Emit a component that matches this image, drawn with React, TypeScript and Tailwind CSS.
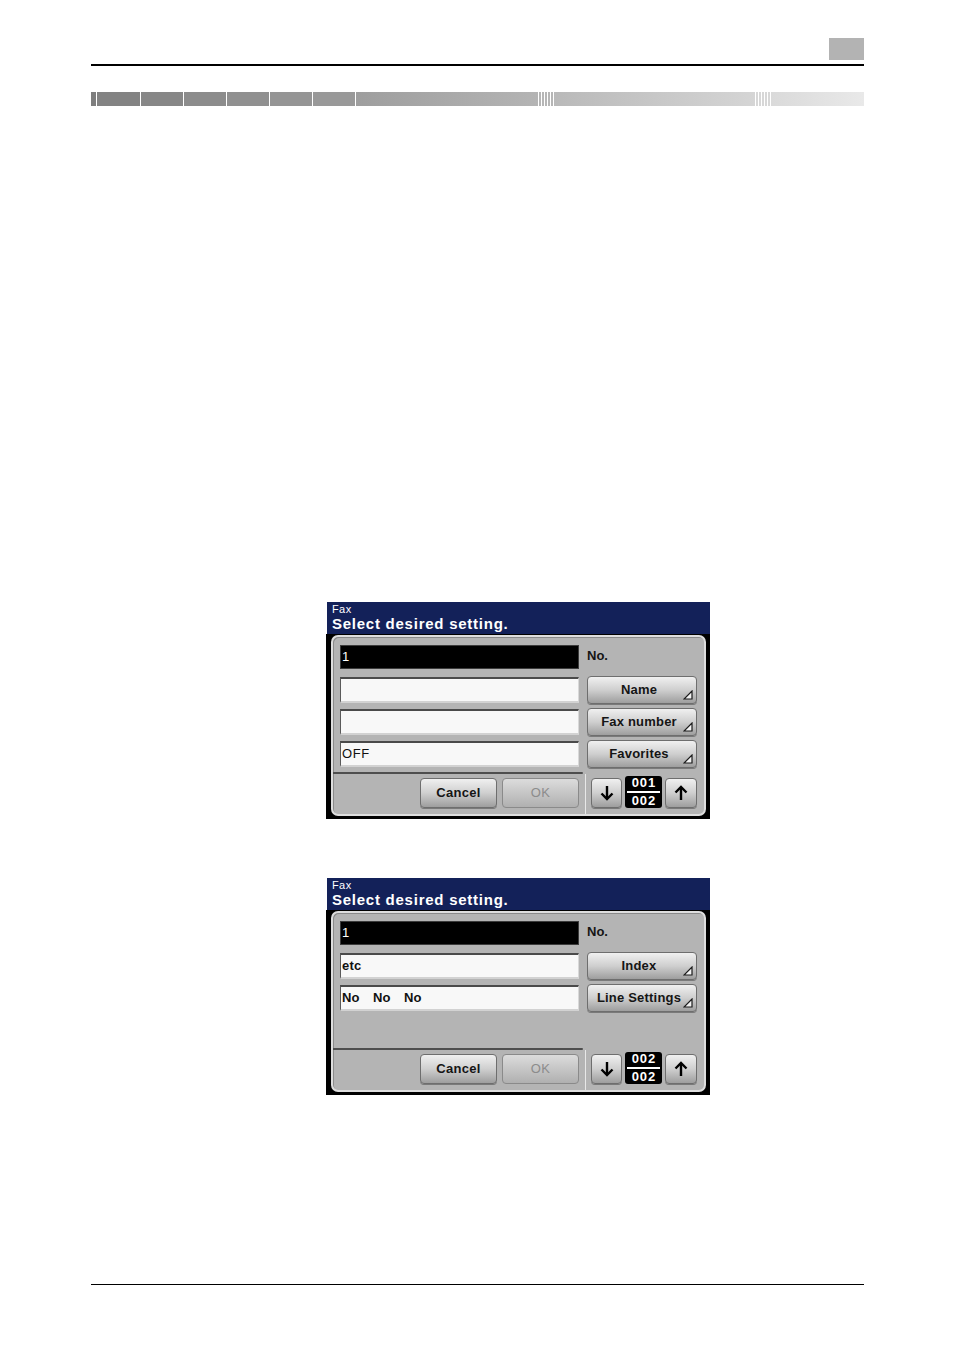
import React from "react";

// Fax settings screens, two states of the same touch panel.
type Field = { text: string | string[]; bold?: boolean; dark?: boolean };
type Screen = {
  fields: Field[];
  buttons: string[];
  page: [string, string];
};

const screens: Screen[] = [
  {
    fields: [
      { text: "1", dark: true },
      { text: "" },
      { text: "" },
      { text: "OFF" },
    ],
    buttons: ["Name", "Fax number", "Favorites"],
    page: ["001", "002"],
  },
  {
    fields: [
      { text: "1", dark: true },
      { text: "etc", bold: true },
      { text: ["No", "No", "No"], bold: true },
    ],
    buttons: ["Index", "Line Settings"],
    page: ["002", "002"],
  },
];

function CornerMark() {
  return (
    <svg
      width="10"
      height="10"
      viewBox="0 0 10 10"
      className="absolute right-[3px] bottom-[3px]"
    >
      <polygon
        points="9,1 9,9 1,9"
        fill="#f2f2f2"
        stroke="#1a1a1a"
        strokeWidth="1.2"
      />
    </svg>
  );
}

function Arrow({ up }: { up?: boolean }) {
  return (
    <svg width="16" height="16" viewBox="0 0 16 16">
      {up ? (
        <>
          <line x1="8" y1="15" x2="8" y2="2.5" stroke="#000" strokeWidth="2.4" />
          <polyline points="2.5,7.5 8,2 13.5,7.5" fill="none" stroke="#000" strokeWidth="2.4" />
        </>
      ) : (
        <>
          <line x1="8" y1="1" x2="8" y2="13.5" stroke="#000" strokeWidth="2.4" />
          <polyline points="2.5,8.5 8,14 13.5,8.5" fill="none" stroke="#000" strokeWidth="2.4" />
        </>
      )}
    </svg>
  );
}

const btn =
  "rounded-[4px] border border-[#6e6e6e] bg-gradient-to-b from-[#f0f0f0] via-[#cfcfcf] to-[#9e9e9e] shadow-[0_1px_0_#7a7a7a]";

function PanelScreen({ screen }: { screen: Screen }) {
  return (
    <div className="ml-[326px] w-[384px] h-[217px] flex flex-col">
      {/* Title bar */}
      <div className="ml-[1px] h-[32px] bg-[#132159] pl-[5px] flex flex-col text-white">
        <span className="text-[11px] leading-[12px] mt-[1px] tracking-[0.4px]">Fax</span>
        <span className="text-[15px] leading-[17px] font-bold tracking-[0.75px]">
          Select desired setting.
        </span>
      </div>

      {/* Panel */}
      <div className="h-[185px] bg-black pt-[1px] pl-[5px] pr-[4px] pb-[3px]">
        <div className="h-[181px] rounded-[7px] border-2 border-[#dedede] bg-[#b4b4b4] flex flex-col shadow-[inset_1px_1px_0_#8a8a8a]">
          <div className="h-[128px] mt-[7px] flex flex-col">
            {screen.fields.map((f, i) => (
              <div key={i} className="h-[32px] flex pl-[7px] pr-[7px] gap-[8px]">
                {f.dark ? (
                  <div className="mt-[1px] w-[239px] h-[24px] bg-black border border-[#3c3c3c] text-white text-[13px] leading-[22px] pl-px">
                    {f.text}
                  </div>
                ) : (
                  <div
                    className={`mt-[1px] w-[239px] h-[26px] flex bg-[#f8f8f8] border-t-2 border-l border-b-2 border-r border-t-[#4a4a4a] border-l-[#5a5a5a] border-b-[#d2d2d2] border-r-[#d8d8d8] text-[#111] text-[13px] leading-[21px] pl-px ${
                      f.bold ? "font-bold tracking-[0.2px]" : "tracking-[0.6px]"
                    }`}
                  >
                    {Array.isArray(f.text)
                      ? f.text.map((t, k) => (
                          <span key={k} className="w-[31px]">
                            {t}
                          </span>
                        ))
                      : f.text}
                  </div>
                )}
                {i === 0 ? (
                  <div className="text-[13px] font-bold text-[#151515] leading-[24px]">No.</div>
                ) : (
                  <div
                    className={`relative w-[110px] h-[28px] ${btn} flex items-center justify-center pr-[6px] text-[13px] font-bold text-[#151515] tracking-[0.2px]`}
                  >
                    {screen.buttons[i - 1]}
                    <CornerMark />
                  </div>
                )}
              </div>
            ))}
          </div>

          {/* Separator */}
          <div className="flex h-[2px]">
            <div className="w-[250px] h-[2px] bg-[#4e4e4e] rounded-r-[2px]" />
          </div>

          {/* Bottom bar */}
          <div className="h-[40px] flex">
            <div className="w-[250px] flex justify-end gap-[5px] pr-[4px] pt-[4px]">
              <div className={`w-[77px] h-[30px] ${btn} flex items-center justify-center text-[13px] font-bold text-[#151515] tracking-[0.3px]`}>
                Cancel
              </div>
              <div className="w-[77px] h-[30px] rounded-[4px] border border-[#8a8a8a] bg-gradient-to-b from-[#dcdcdc] to-[#b0b0b0] flex items-center justify-center text-[13px] text-[#8c8c8c] tracking-[0.3px]">
                OK
              </div>
            </div>
            <div className="w-[2px]" />
            <div className="w-px bg-[#e8e8e8]" />
            <div className="flex pl-[5px] gap-[3px]">
              <div className={`mt-[4px] w-[31px] h-[30px] ${btn} flex items-center justify-center`}>
                <Arrow />
              </div>
              <div className="mt-[2px] w-[37px] h-[32px] bg-black rounded-[3px] flex flex-col items-center justify-center text-white text-[13px] font-bold leading-[14px] tracking-[1px]">
                <span className="pl-px">{screen.page[0]}</span>
                <div className="w-[33px] h-[2px] bg-white my-[1px]" />
                <span className="pl-px">{screen.page[1]}</span>
              </div>
              <div className={`mt-[4px] w-[32px] h-[30px] ${btn} flex items-center justify-center`}>
                <Arrow up />
              </div>
            </div>
          </div>
        </div>
      </div>
    </div>
  );
}

function HeaderBand() {
  const strips = (color: string) =>
    [0, 1, 2, 3, 4].map((k) => <div key={k} className="w-[2px]" style={{ background: color }} />);
  return (
    <div className="ml-[91px] mr-[90px] mt-[26px] h-[14px] flex gap-px bg-white">
      <div className="w-[5px] bg-[#7e7e7e]" />
      <div className="w-[43px] bg-[#838383]" />
      <div className="w-[42px] bg-[#878787]" />
      <div className="w-[42px] bg-[#8c8c8c]" />
      <div className="w-[42px] bg-[#909090]" />
      <div className="w-[42px] bg-[#959595]" />
      <div className="w-[42px] bg-[#999999]" />
      <div className="w-[182px] bg-gradient-to-r from-[#9e9e9e] to-[#b4b4b4]" />
      {strips("#b6b6b6")}
      <div className="w-[201px] bg-gradient-to-r from-[#b9b9b9] to-[#d5d5d5]" />
      {strips("#d7d7d7")}
      <div className="flex-1 bg-gradient-to-r from-[#dadada] to-[#e9e9e9]" />
    </div>
  );
}

export default function App() {
  return (
    <div className="w-[954px] h-[1350px] bg-white flex flex-col font-['Liberation_Sans',Arial,sans-serif]">
      {/* Page header */}
      <div className="ml-[91px] mr-[90px] pt-[38px] flex flex-col">
        <div className="self-end w-[35px] h-[22px] bg-[#b3b3b3]" />
        <div className="mt-[4px] h-[1.5px] bg-black" />
      </div>
      <HeaderBand />

      <div className="mt-[496px]">
        <PanelScreen screen={screens[0]} />
      </div>
      <div className="mt-[59px]">
        <PanelScreen screen={screens[1]} />
      </div>

      {/* Page footer rule */}
      <div className="ml-[91px] mr-[90px] mt-[189px] h-px bg-black" />
    </div>
  );
}
